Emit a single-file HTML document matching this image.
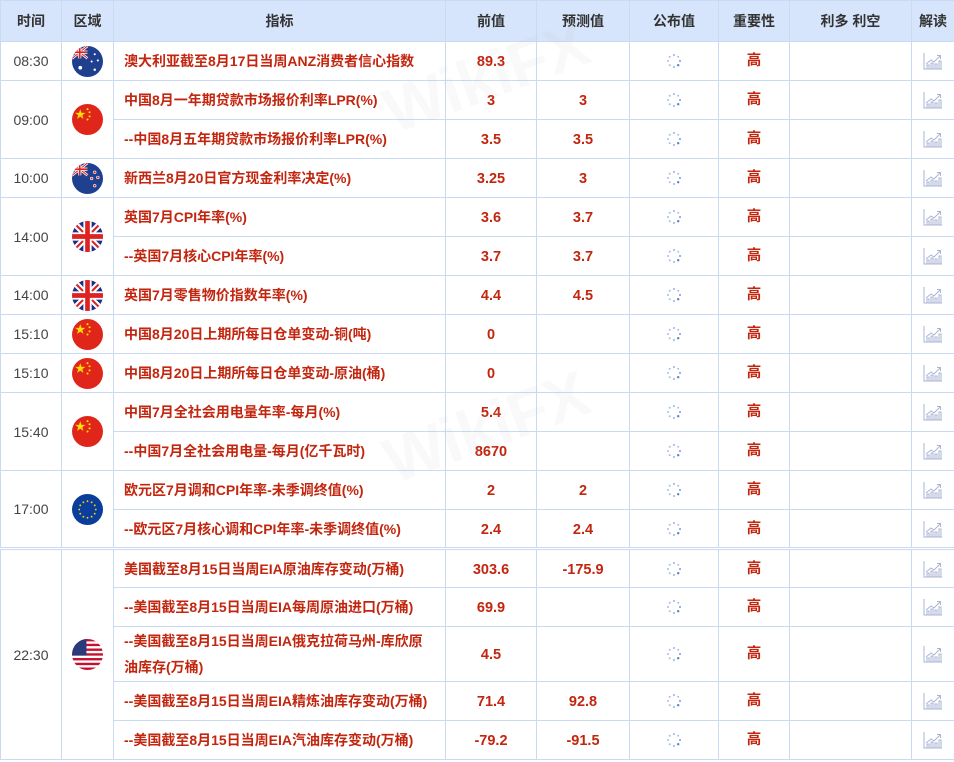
<!DOCTYPE html>
<html><head><meta charset="utf-8">
<style>
*{margin:0;padding:0;box-sizing:border-box}
body{width:954px;height:762px;background:#fff;overflow:hidden;font-family:"Liberation Sans","Noto Sans CJK SC",sans-serif;position:relative}
table{border-collapse:collapse;table-layout:fixed;width:954px;position:absolute;left:0;top:0}
td,th{border:1px solid #c9daf2;height:39px;text-align:center;font-size:14px;vertical-align:middle;overflow:hidden;line-height:20px}
th{background:#d6e5fb;height:41px;font-weight:bold;color:#333;font-size:14px}
td.t{color:#444;font-size:14px}
td.n{color:#c3260f;font-weight:bold;text-align:left;padding-left:10px;padding-right:6px;font-size:14px}
td.n2{line-height:26px}
td.v{color:#c3260f;font-weight:bold;font-size:14.5px;padding-top:2px}
td.g{color:#c3260f;font-weight:bold;font-size:14.5px}
tr.sep td{border-top:3px double #c9daf2}
.flag{width:31px;height:31px;display:block;margin:0 auto}
.sp{width:16px;height:16px;display:block;margin:0 auto}
.ic{width:20px;height:18px;display:block;margin:0 auto}
.wm{position:absolute;font-family:"Liberation Sans",sans-serif;font-weight:bold;font-size:64px;color:rgba(200,200,200,0.10);transform:rotate(-20deg);pointer-events:none}
</style></head><body>
<svg width="0" height="0" style="position:absolute">
<defs>
<clipPath id="c"><circle cx="15" cy="15" r="15"/></clipPath>
<symbol id="cn" viewBox="0 0 30 30"><g clip-path="url(#c)"><rect width="30" height="30" fill="#e0261b"/><polygon points="8,5 9.2,8.6 13,8.6 10,10.8 11.1,14.4 8,12.2 4.9,14.4 6,10.8 3,8.6 6.8,8.6" fill="#ffde00"/><circle cx="15" cy="5" r="1" fill="#ffde00"/><circle cx="17" cy="8" r="1" fill="#ffde00"/><circle cx="17" cy="12" r="1" fill="#ffde00"/><circle cx="15" cy="15" r="1" fill="#ffde00"/></g></symbol>
<symbol id="au" viewBox="0 0 30 30"><g clip-path="url(#c)"><rect width="30" height="30" fill="#1f3f8f"/><path d="M0 0L15 12M15 0L0 12" stroke="#fff" stroke-width="2.5"/><path d="M0 0L15 12M15 0L0 12" stroke="#d22" stroke-width="1"/><path d="M7.5 0V12M0 6H15" stroke="#fff" stroke-width="3"/><path d="M7.5 0V12M0 6H15" stroke="#d22" stroke-width="1.6"/><circle cx="8" cy="21" r="1.8" fill="#fff"/><circle cx="22" cy="8" r="1" fill="#fff"/><circle cx="25" cy="14" r="1" fill="#fff"/><circle cx="19" cy="15" r="1" fill="#fff"/><circle cx="22" cy="23" r="1.2" fill="#fff"/></g></symbol>
<symbol id="nz" viewBox="0 0 30 30"><g clip-path="url(#c)"><rect width="30" height="30" fill="#1f3f8f"/><path d="M0 0L15 12M15 0L0 12" stroke="#fff" stroke-width="2.5"/><path d="M0 0L15 12M15 0L0 12" stroke="#d22" stroke-width="1"/><path d="M7.5 0V12M0 6H15" stroke="#fff" stroke-width="3"/><path d="M7.5 0V12M0 6H15" stroke="#d22" stroke-width="1.6"/><circle cx="22" cy="9" r="1.3" fill="#d22" stroke="#fff" stroke-width=".6"/><circle cx="25" cy="14" r="1.3" fill="#d22" stroke="#fff" stroke-width=".6"/><circle cx="19" cy="15" r="1.3" fill="#d22" stroke="#fff" stroke-width=".6"/><circle cx="22" cy="22" r="1.3" fill="#d22" stroke="#fff" stroke-width=".6"/></g></symbol>
<symbol id="uk" viewBox="0 0 30 30"><g clip-path="url(#c)"><rect width="30" height="30" fill="#1f2f7f"/><path d="M0 0L30 30M30 0L0 30" stroke="#fff" stroke-width="6"/><path d="M0 0L30 30M30 0L0 30" stroke="#d22" stroke-width="2"/><path d="M15 0V30M0 15H30" stroke="#fff" stroke-width="8"/><path d="M15 0V30M0 15H30" stroke="#d22" stroke-width="4.5"/></g></symbol>
<symbol id="eu" viewBox="0 0 30 30"><g clip-path="url(#c)"><rect width="30" height="30" fill="#0b3d9c"/><g fill="#f4d400"><circle cx="15" cy="7" r=".9"/><circle cx="19" cy="8" r=".9"/><circle cx="22" cy="11" r=".9"/><circle cx="23" cy="15" r=".9"/><circle cx="22" cy="19" r=".9"/><circle cx="19" cy="22" r=".9"/><circle cx="15" cy="23" r=".9"/><circle cx="11" cy="22" r=".9"/><circle cx="8" cy="19" r=".9"/><circle cx="7" cy="15" r=".9"/><circle cx="8" cy="11" r=".9"/><circle cx="11" cy="8" r=".9"/></g></g></symbol>
<symbol id="us" viewBox="0 0 30 30"><g clip-path="url(#c)"><rect width="30" height="30" fill="#fff"/><g fill="#c8102e"><rect y="0" width="30" height="2.3"/><rect y="4.6" width="30" height="2.3"/><rect y="9.2" width="30" height="2.3"/><rect y="13.8" width="30" height="2.3"/><rect y="18.4" width="30" height="2.3"/><rect y="23" width="30" height="2.3"/><rect y="27.6" width="30" height="2.4"/></g><rect width="14" height="16" fill="#2a3a7a"/></g></symbol>
<symbol id="sp" viewBox="0 0 16 16"><g fill="#a8c0e8"><circle cx="8" cy="2" r="1.1"/><circle cx="12.2" cy="3.8" r="1"/><circle cx="14" cy="8" r="1" fill="#7a9ad8"/><circle cx="12.2" cy="12.2" r="1.2" fill="#5a80c8"/><circle cx="8" cy="14" r="1.1"/><circle cx="3.8" cy="12.2" r="1"/><circle cx="2" cy="8" r="1"/><circle cx="3.8" cy="3.8" r="1"/></g></symbol>
<symbol id="ic" viewBox="0 0 20 18"><g fill="none" stroke="#aab4d4" stroke-width="1"><path d="M1 1V17H19"/><path d="M3 12L8 8L11 10L17 4"/><path d="M14 3.5L17.5 3.5L17.5 7"/><rect x="4" y="13" width="2" height="4"/><rect x="8" y="11" width="2" height="6"/><rect x="12" y="12" width="2" height="5"/><rect x="16" y="9" width="2" height="8"/></g></symbol>
</defs></svg>
<table>
<colgroup><col style="width:61px"><col style="width:52px"><col style="width:332px"><col style="width:91px"><col style="width:93px"><col style="width:89px"><col style="width:71px"><col style="width:122px"><col style="width:43px"></colgroup>
<tr><th>时间</th><th>区域</th><th>指标</th><th>前值</th><th>预测值</th><th>公布值</th><th>重要性</th><th>利多 利空</th><th>解读</th></tr>
<tr><td class="t">08:30</td><td><svg class="flag"><use href="#au"/></svg></td><td class="n">澳大利亚截至8月17日当周ANZ消费者信心指数</td><td class="v">89.3</td><td class="v"></td><td><svg class="sp"><use href="#sp"/></svg></td><td class="g">高</td><td></td><td><svg class="ic"><use href="#ic"/></svg></td></tr>
<tr><td class="t" rowspan="2">09:00</td><td rowspan="2"><svg class="flag"><use href="#cn"/></svg></td><td class="n">中国8月一年期贷款市场报价利率LPR(%)</td><td class="v">3</td><td class="v">3</td><td><svg class="sp"><use href="#sp"/></svg></td><td class="g">高</td><td></td><td><svg class="ic"><use href="#ic"/></svg></td></tr>
<tr><td class="n">--中国8月五年期贷款市场报价利率LPR(%)</td><td class="v">3.5</td><td class="v">3.5</td><td><svg class="sp"><use href="#sp"/></svg></td><td class="g">高</td><td></td><td><svg class="ic"><use href="#ic"/></svg></td></tr>
<tr><td class="t">10:00</td><td><svg class="flag"><use href="#nz"/></svg></td><td class="n">新西兰8月20日官方现金利率决定(%)</td><td class="v">3.25</td><td class="v">3</td><td><svg class="sp"><use href="#sp"/></svg></td><td class="g">高</td><td></td><td><svg class="ic"><use href="#ic"/></svg></td></tr>
<tr><td class="t" rowspan="2">14:00</td><td rowspan="2"><svg class="flag"><use href="#uk"/></svg></td><td class="n">英国7月CPI年率(%)</td><td class="v">3.6</td><td class="v">3.7</td><td><svg class="sp"><use href="#sp"/></svg></td><td class="g">高</td><td></td><td><svg class="ic"><use href="#ic"/></svg></td></tr>
<tr><td class="n">--英国7月核心CPI年率(%)</td><td class="v">3.7</td><td class="v">3.7</td><td><svg class="sp"><use href="#sp"/></svg></td><td class="g">高</td><td></td><td><svg class="ic"><use href="#ic"/></svg></td></tr>
<tr><td class="t">14:00</td><td><svg class="flag"><use href="#uk"/></svg></td><td class="n">英国7月零售物价指数年率(%)</td><td class="v">4.4</td><td class="v">4.5</td><td><svg class="sp"><use href="#sp"/></svg></td><td class="g">高</td><td></td><td><svg class="ic"><use href="#ic"/></svg></td></tr>
<tr><td class="t">15:10</td><td><svg class="flag"><use href="#cn"/></svg></td><td class="n">中国8月20日上期所每日仓单变动-铜(吨)</td><td class="v">0</td><td class="v"></td><td><svg class="sp"><use href="#sp"/></svg></td><td class="g">高</td><td></td><td><svg class="ic"><use href="#ic"/></svg></td></tr>
<tr><td class="t">15:10</td><td><svg class="flag"><use href="#cn"/></svg></td><td class="n">中国8月20日上期所每日仓单变动-原油(桶)</td><td class="v">0</td><td class="v"></td><td><svg class="sp"><use href="#sp"/></svg></td><td class="g">高</td><td></td><td><svg class="ic"><use href="#ic"/></svg></td></tr>
<tr><td class="t" rowspan="2">15:40</td><td rowspan="2"><svg class="flag"><use href="#cn"/></svg></td><td class="n">中国7月全社会用电量年率-每月(%)</td><td class="v">5.4</td><td class="v"></td><td><svg class="sp"><use href="#sp"/></svg></td><td class="g">高</td><td></td><td><svg class="ic"><use href="#ic"/></svg></td></tr>
<tr><td class="n">--中国7月全社会用电量-每月(亿千瓦时)</td><td class="v">8670</td><td class="v"></td><td><svg class="sp"><use href="#sp"/></svg></td><td class="g">高</td><td></td><td><svg class="ic"><use href="#ic"/></svg></td></tr>
<tr><td class="t" rowspan="2">17:00</td><td rowspan="2"><svg class="flag"><use href="#eu"/></svg></td><td class="n">欧元区7月调和CPI年率-未季调终值(%)</td><td class="v">2</td><td class="v">2</td><td><svg class="sp"><use href="#sp"/></svg></td><td class="g">高</td><td></td><td><svg class="ic"><use href="#ic"/></svg></td></tr>
<tr><td class="n">--欧元区7月核心调和CPI年率-未季调终值(%)</td><td class="v">2.4</td><td class="v">2.4</td><td><svg class="sp"><use href="#sp"/></svg></td><td class="g">高</td><td></td><td><svg class="ic"><use href="#ic"/></svg></td></tr>
<tr class="sep"><td class="t" rowspan="5">22:30</td><td rowspan="5"><svg class="flag"><use href="#us"/></svg></td><td class="n">美国截至8月15日当周EIA原油库存变动(万桶)</td><td class="v">303.6</td><td class="v">-175.9</td><td><svg class="sp"><use href="#sp"/></svg></td><td class="g">高</td><td></td><td><svg class="ic"><use href="#ic"/></svg></td></tr>
<tr><td class="n">--美国截至8月15日当周EIA每周原油进口(万桶)</td><td class="v">69.9</td><td class="v"></td><td><svg class="sp"><use href="#sp"/></svg></td><td class="g">高</td><td></td><td><svg class="ic"><use href="#ic"/></svg></td></tr>
<tr><td class="n n2" style="height:55px">--美国截至8月15日当周EIA俄克拉荷马州-库欣原<br>油库存(万桶)</td><td class="v">4.5</td><td class="v"></td><td><svg class="sp"><use href="#sp"/></svg></td><td class="g">高</td><td></td><td><svg class="ic"><use href="#ic"/></svg></td></tr>
<tr><td class="n">--美国截至8月15日当周EIA精炼油库存变动(万桶)</td><td class="v">71.4</td><td class="v">92.8</td><td><svg class="sp"><use href="#sp"/></svg></td><td class="g">高</td><td></td><td><svg class="ic"><use href="#ic"/></svg></td></tr>
<tr><td class="n">--美国截至8月15日当周EIA汽油库存变动(万桶)</td><td class="v">-79.2</td><td class="v">-91.5</td><td><svg class="sp"><use href="#sp"/></svg></td><td class="g">高</td><td></td><td><svg class="ic"><use href="#ic"/></svg></td></tr>
</table>
<div class="wm" style="left:380px;top:40px">WikiFX</div>
<div class="wm" style="left:380px;top:390px">WikiFX</div>
</body></html>
